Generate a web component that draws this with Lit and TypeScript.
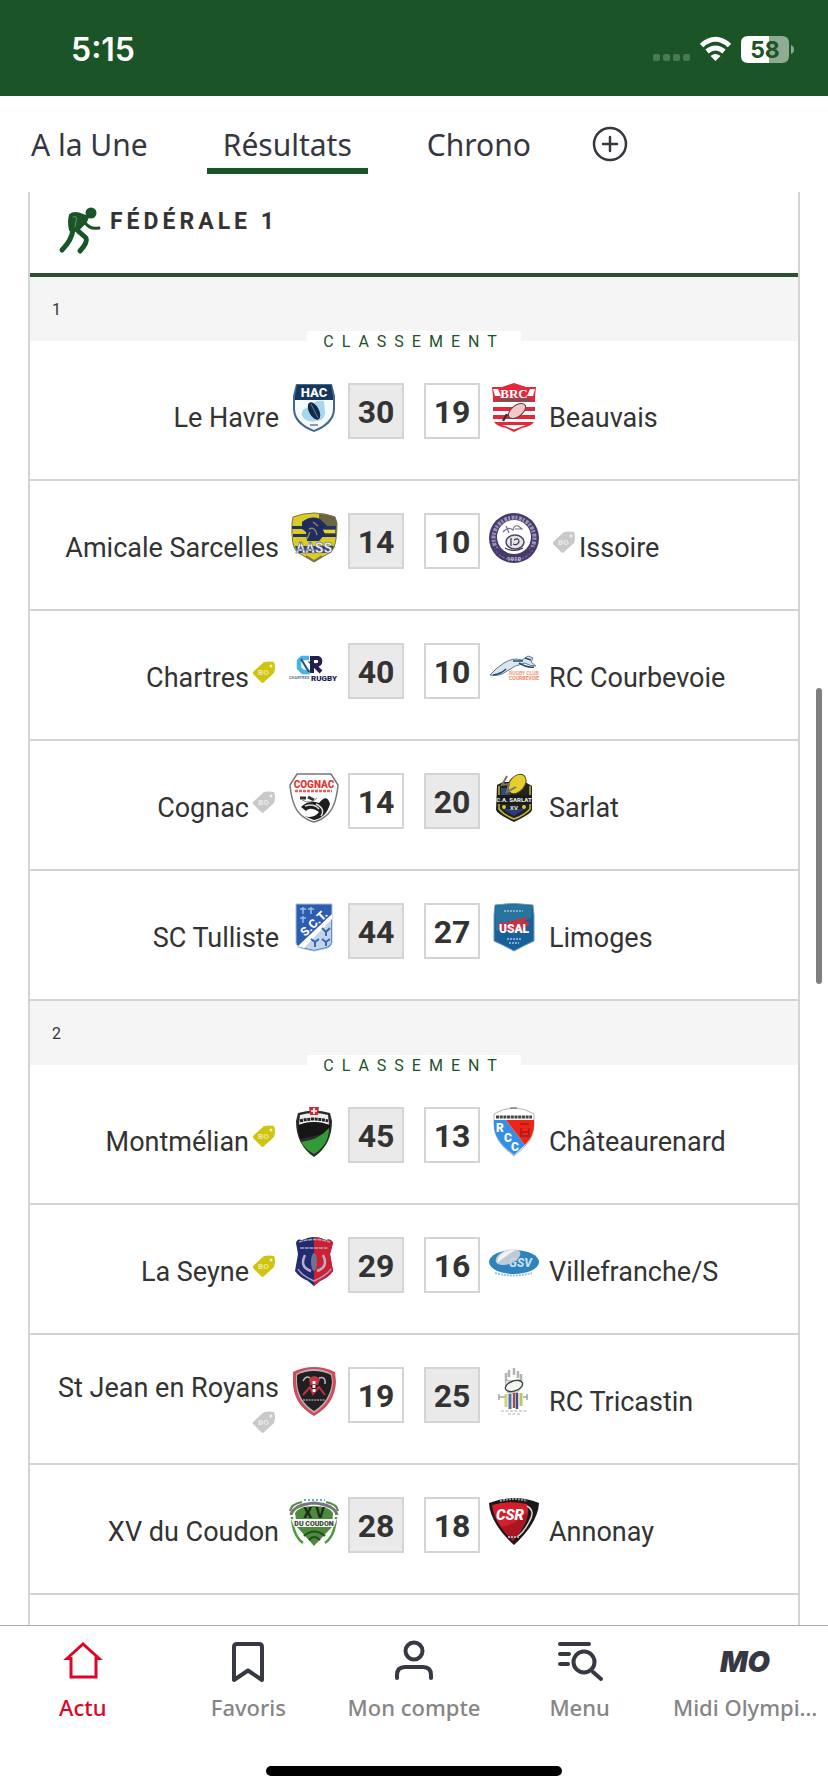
import { LitElement, html, svg, css, nothing, SVGTemplateResult } from "lit";
import { customElement, property } from "lit/decorators.js";
import { classMap } from "lit/directives/class-map.js";

type Tag = "gold" | "silver";
interface Team {
  name: string;
  crest: string;
  tag?: Tag;
}
interface Match {
  home: Team;
  away: Team;
  score: [number, number];
}
interface Pool {
  id: string;
  matches: Match[];
}

const pools: Pool[] = [
  {
    id: "1",
    matches: [
      { home: { name: "Le Havre", crest: "havre" }, away: { name: "Beauvais", crest: "beauvais" }, score: [30, 19] },
      { home: { name: "Amicale Sarcelles", crest: "sarcelles" }, away: { name: "Issoire", crest: "issoire", tag: "silver" }, score: [14, 10] },
      { home: { name: "Chartres", crest: "chartres", tag: "gold" }, away: { name: "RC Courbevoie", crest: "courbevoie" }, score: [40, 10] },
      { home: { name: "Cognac", crest: "cognac", tag: "silver" }, away: { name: "Sarlat", crest: "sarlat" }, score: [14, 20] },
      { home: { name: "SC Tulliste", crest: "tulle" }, away: { name: "Limoges", crest: "limoges" }, score: [44, 27] },
    ],
  },
  {
    id: "2",
    matches: [
      { home: { name: "Montmélian", crest: "montmelian", tag: "gold" }, away: { name: "Châteaurenard", crest: "chateaurenard" }, score: [45, 13] },
      { home: { name: "La Seyne", crest: "seyne", tag: "gold" }, away: { name: "Villefranche/S", crest: "villefranche" }, score: [29, 16] },
      { home: { name: "St Jean en Royans", crest: "royans", tag: "silver" }, away: { name: "RC Tricastin", crest: "tricastin" }, score: [19, 25] },
      { home: { name: "XV du Coudon", crest: "coudon" }, away: { name: "Annonay", crest: "annonay" }, score: [28, 18] },
    ],
  },
];

const crests: Record<string, SVGTemplateResult> = {
  havre: svg`
    <path d="M7 1H43L46 13V26C46 37 37 45 25 49C13 45 4 37 4 26V13Z" fill="#41688f"/>
    <path d="M8 2H42L44 13V17H6V13Z" fill="#16365c"/>
    <path d="M6 17H44V26C44 36 35 43 25 47C15 43 6 36 6 26Z" fill="#f7fafc"/>
    <path d="M13 33Q12 24 20 25Q25 16 35 18L36 30Q36 37 27 38Q17 40 13 33Z" fill="#a8d6ee"/>
    <ellipse cx="25" cy="28" rx="5" ry="9.500" transform="rotate(-28 25 28)" fill="#12294a"/>
    <path d="M22 21L29 35" stroke="#66809c" stroke-width="1"/>
    <path d="M21 42H29" stroke="#8d9bab" stroke-width="2"/>
    <text x="25" y="14" text-anchor="middle" font-size="13" font-weight="800" fill="#fff">HAC</text>`,
  beauvais: svg`
    <path d="M3 4L13 4L25 0L37 4H47L46 14V37Q44 43 33 45L25 49L17 45Q6 43 4 37V14Z" fill="#e2283a"/>
    <path d="M4 19H46V24H4ZM4 28H46V32H4ZM4 36H46V39H4ZM13 42H37L25 46.500Z" fill="#fff"/>
    <path d="M4 6L9 6L12 13H6ZM46 6L41 6L38 13H44Z" fill="#fff"/>
    <path d="M8 17H42" stroke="#6d5557" stroke-width="3"/>
    <text x="25" y="15" text-anchor="middle" font-size="13" font-weight="900" fill="#fff" font-family="Liberation Serif, serif">BRC</text>
    <path d="M14 38L18 31" stroke="#333" stroke-width="2.500"/>
    <ellipse cx="28" cy="28" rx="10" ry="5.500" transform="rotate(-38 28 28)" fill="#f6c6c8" stroke="#5b3a3e" stroke-width="1"/>`,
  sarcelles: svg`
    <path d="M4 4Q14 0 25 0Q36 0 46 4L48 10Q48 34 42 39L25 49L8 39Q2 34 3 10Z" fill="#d9cd25" stroke="#77734a"/>
    <path d="M30 1Q40 1 46 4L48 10L47 22H30Z" fill="#6b6544"/>
    <path d="M3 13H47V16H3ZM4 21H47V24H4Z" fill="#23306a"/>
    <path d="M33 17H46V20H34Z" fill="#e6d91f"/>
    <path d="M13 9Q22 2 31 6L38 13L33 15L36 21L30 28H18L17 19L13 16Z" fill="#1e2c5f"/>
    <path d="M20 16Q26 13 28 22M24 9L29 13M18 26L21 19" stroke="#8a8a5c" stroke-width="1.500" fill="none"/>
    <path d="M6 33H45L42 40H8Z" fill="#35406e"/>
    <text x="25" y="40" text-anchor="middle" font-size="14" font-weight="900" fill="#f5f5f8" stroke="#4c5480" stroke-width=".5">AASS</text>
    <path d="M17 43L25 48L33 43" stroke="#77734a" stroke-width="1.500" fill="none"/>`,
  issoire: svg`
    <circle cx="25" cy="25" r="25" fill="#473a6b"/>
    <circle cx="25" cy="25" r="20.500" fill="none" stroke="#9a92b4" stroke-width="4" stroke-dasharray="2 1.500 3 1" />
    <path d="M4 33A23 23 0 0 0 46 33L36 38H14Z" fill="#473a6b"/>
    <circle cx="25" cy="24" r="17" fill="#fff"/>
    <path d="M14 19Q19 13 24 17Q26 9 33 16H26M20 20L17 13" stroke="#756d89" stroke-width="1.200" fill="none"/>
    <ellipse cx="26" cy="29" rx="9" ry="7" fill="#e5e5ea" stroke="#4d4762" stroke-width="1.500"/>
    <path d="M22 25V33M25 27Q30 24 30 29Q28 33 24 31M16 35Q25 40 34 35" stroke="#37334a" stroke-width="1.200" fill="none"/>
    <text x="25" y="48" text-anchor="middle" font-size="6" font-weight="700" fill="#cfcade">1910</text>`,
  chartres: svg`
    <path d="M20 15H13L10 18V25L14 29H21" fill="none" stroke="#49b4e4" stroke-width="4.500"/>
    <path d="M12 16L20 29" stroke="#234b86" stroke-width="2"/>
    <path d="M23 30V15H29Q32 16 31 20Q29 23 25 22L32 29" fill="none" stroke="#221f4c" stroke-width="4"/>
    <text x="0" y="36" font-size="4" font-weight="700" fill="#6b6f86">CHARTRES</text>
    <text x="22" y="38" font-size="8" font-weight="900" fill="#221f4c">RUGBY</text>`,
  courbevoie: svg`
    <path d="M1 32Q8 24 15 20Q24 14 33 17L39 13L44 15L42 19L47 23Q40 23 36 20Q26 22 18 28Q10 34 1 32Z" fill="#dbe5ec" stroke="#5c7a96" stroke-width="1"/>
    <path d="M4 32Q12 31 17 26M24 18H34M36 15L42 17M30 20Q38 25 45 24" stroke="#2c4b6c" stroke-width="1.500" fill="none"/>
    <text x="20" y="32" font-size="5" font-weight="700" fill="#f09a7d">RUGBY CLUB</text>
    <text x="20" y="37" font-size="5" font-weight="700" fill="#ef8763">COURBEVOIE</text>`,
  cognac: svg`
    <path d="M8 1H42L49 12Q47 33 39 41Q33 47 25 49Q17 47 11 41Q3 33 1 12Z" fill="#fff" stroke="#777" stroke-width="1.500"/>
    <text x="25" y="15" text-anchor="middle" font-size="10" font-weight="900" fill="#e03a34">COGNAC</text>
    <path d="M6 18H43" stroke="#e2635d" stroke-width="2.500" stroke-dasharray="3 1"/>
    <path d="M11 25H17M19 24L25 27" stroke="#333" stroke-width="3" fill="none"/>
    <path d="M12 34Q20 26 30 30Q38 20 41 31Q37 45 25 47L15 43Q25 46 30 39Q21 33 17 38Z" fill="#1d1d1d"/>
    <path d="M27 31Q37 36 32 43M16 33Q25 30 30 36" stroke="#ddd" stroke-width="1.500" fill="none"/>
    <path d="M13 27Q22 32 28 25" stroke="#888" fill="none"/>`,
  sarlat: svg`
    <path d="M8 12L14 9H36L43 13V37Q42 41 25 49Q8 41 7 37Z" fill="#20231f"/>
    <path d="M10 13V36Q15 42 25 46Q36 42 41 36V13" fill="none" stroke="#c6b832" stroke-width="1.500"/>
    <path d="M12 15H21V26H12Z" fill="#314a7a"/>
    <path d="M14 36H36L25 43Z" fill="#2c3a86"/>
    <ellipse cx="28" cy="11" rx="11" ry="7.500" transform="rotate(-50 28 11)" fill="#e4cf2f" stroke="#4a451d"/>
    <path d="M18 3L13 12L20 11L18 19L27 14" stroke="#77765f" stroke-width="2" fill="none"/>
    <path d="M8 22H42V31H8Z" fill="#191b18"/>
    <text x="25" y="29" text-anchor="middle" font-size="6" font-weight="800" fill="#eee">C.A. SARLAT</text>
    <circle cx="15" cy="34" r="2" fill="#ddc82e"/><circle cx="35" cy="34" r="2" fill="#ddc82e"/>
    <text x="25" y="37" text-anchor="middle" font-size="6" font-weight="800" fill="#ddd">XV</text>`,
  tulle: svg`
    <path d="M7 1H43V40Q42 45 34 46L25 48L16 46Q8 45 7 40Z" fill="#2d5dae" stroke="#a7bee0"/>
    <path d="M42 12V40Q41 44 34 45L25 47L16 45L9 44Z" fill="#c2d3ec"/>
    <path d="M43 11V16L15 45L9 43Z" fill="#fff"/>
    <path d="M14 4V11M11 6H17M22 4V11M19 6H25M14 13V20M11 15H17" stroke="#9dbce6" stroke-width="1.500"/>
    <path d="M33 25L37 29L41 25M37 29V33M22 36L26 39L30 36M26 39V44M33 36L37 39L41 36M37 39V43" stroke="#3b68ac" stroke-width="2" fill="none"/>
    <text transform="translate(16 34) rotate(-43)" font-size="12" font-weight="800" fill="#fff">S.C.T.</text>`,
  limoges: svg`
    <path d="M6 2Q25 -1 44 2L45 12V38Q36 42 25 48Q14 42 5 38V12Z" fill="#17609a" stroke="#6f9dc0"/>
    <path d="M6 3Q25 0 43 3L42 15L7 28Z" fill="#28749f"/>
    <path d="M15 8H34" stroke="#9ebfd8" stroke-width="1.500" stroke-dasharray="2 1"/>
    <path d="M9 21L39 14L36 18L41 20L33 29L10 27Z" fill="#c7303e"/>
    <text x="25" y="30" text-anchor="middle" font-size="12" font-weight="900" fill="#fff">USAL</text>
    <path d="M18 36H32M20 40H30" stroke="#80aad0" stroke-width="2" stroke-dasharray="2 1"/>`,
  montmelian: svg`
    <path d="M9 6Q25 1 41 6L43 14Q43 38 25 50Q7 38 7 14Z" fill="#2b2b2b"/>
    <path d="M11 8Q25 4 39 8L40 18Q25 12 10 18Z" fill="#eee"/>
    <path d="M9 18Q25 12 41 18Q41 22 39 26L11 32Q9 25 9 18Z" fill="#161616"/>
    <path d="M12 35Q30 33 40 21Q40 38 25 47Q16 42 12 35Z" fill="#349a38"/>
    <path d="M11 14Q25 10 39 14" stroke="#222" stroke-width="3" stroke-dasharray="3 .7" fill="none"/>
    <path d="M20 0H30L29 8H21Z" fill="#c6303a"/><path d="M25 1V7M22 4H28" stroke="#fff" stroke-width="1.500"/>`,
  chateaurenard: svg`
    <path d="M5 7Q14 1 25 1Q36 1 45 7V18Q45 35 25 49Q5 35 5 18Z" fill="#fff" stroke="#b4b4b4"/>
    <path d="M5 13H17L36 38L25 48Q5 34 5 18Z" fill="#3490e4"/>
    <path d="M17 13H45V18Q45 29 36 38Z" fill="#ee2418"/>
    <path d="M31 17H40M32 21V29H40V21M33 25H39" stroke="#b51d16" stroke-width="2" fill="none"/>
    <path d="M7 10H43" stroke="#434343" stroke-width="3" stroke-dasharray="3 .7"/>
    <path d="M21 1H28" stroke="#555"/>
    <g font-size="12" font-weight="900" fill="#fff"><text x="7" y="25">R</text><text x="15" y="35">C</text><text x="22" y="44">C</text></g>`,
  seyne: svg`
    <path d="M13 3Q20 0 25 0Q30 0 37 3Q42 1 44 6L41 17L44 34Q40 40 31 44L25 49L19 44Q10 40 6 34L9 17L7 6Q8 1 13 3Z" fill="#222b70"/>
    <path d="M25 0Q30 0 37 3Q42 1 44 6L41 17L44 34Q40 40 31 44L25 49Z" fill="#cf2033"/>
    <path d="M10 5Q25 0 41 5M11 11H39" stroke="#a8a2b8" stroke-width="1.500" fill="none" stroke-dasharray="4 .7"/>
    <path d="M16 18Q10 30 22 34M34 18Q40 30 28 34" stroke="#b9b0c8" stroke-width="2.500" fill="none"/>
    <ellipse cx="25" cy="25" rx="3" ry="9" fill="#6d7395"/>
    <path d="M9 32Q12 38 25 44Q38 38 42 32" stroke="#aaa0b8" stroke-width="1.500" fill="none"/>`,
  villefranche: svg`
    <ellipse cx="25" cy="25" rx="25" ry="12" fill="#2e83bf"/>
    <text x="20" y="30" font-size="12" font-weight="800" font-style="italic" fill="#c9e1f3">GSV</text>
    <ellipse cx="19" cy="20" rx="13" ry="7" transform="rotate(-22 19 20)" fill="#cfd2d6" fill-opacity=".9"/>
    <path d="M8 26Q9 13 28 12Q18 18 8 26Z" fill="#f2f2f4"/>
    <path d="M6 36Q25 41 43 36" stroke="#9cc2de" stroke-width="2" stroke-dasharray="2 1" fill="none"/>`,
  royans: svg`
    <path d="M4 5Q14 0 25 0Q36 0 46 5L47 15Q46 37 25 49Q4 37 4 15Z" fill="#d04b59"/>
    <path d="M7 7Q15 2 25 2Q35 2 43 7L44 15Q43 35 25 46Q7 35 7 15Z" fill="#b9b1b4"/>
    <path d="M8 8Q16 4 25 4Q34 4 42 8L43 15Q41 34 25 44Q9 34 8 15Z" fill="#211f22"/>
    <path d="M20 12Q25 6 31 12L29 18H21Z" fill="#c03745"/>
    <path d="M14 14Q17 8 21 11M30 11Q37 9 36 17" stroke="#bbb" stroke-width="1.500" fill="none"/>
    <path d="M14 28L21 20L24 27L30 20L36 28" stroke="#c52f3f" stroke-width="2" fill="none"/>
    <path d="M25 14V26" stroke="#eee" stroke-width="3" stroke-dasharray="3 1"/>
    <path d="M14 33H36" stroke="#999" stroke-width="1.500" stroke-dasharray="2 .8"/>`,
  tricastin: svg`
    <path d="M17 14V6M20 10V3M25 8V1M29 11V4M32 14V7" stroke="#aeb5b0" stroke-width="2.500"/>
    <path d="M17 20Q15 11 20 14L30 13Q35 13 32 21L28 26H19Z" fill="#e7e9e4" stroke="#aaa"/>
    <ellipse cx="25" cy="19" rx="9" ry="5" transform="rotate(-20 25 19)" fill="#f5f5f0" stroke="#39413e" stroke-width="1.300"/>
    <path d="M17 27V40" stroke="#cdd37a" stroke-width="3"/><path d="M21 27V42" stroke="#536fa9" stroke-width="3"/><path d="M25 26V41" stroke="#a54652" stroke-width="2.500"/><path d="M28 26V42" stroke="#38518e" stroke-width="2.500"/><path d="M32 26V39" stroke="#c5c05f" stroke-width="3"/>
    <path d="M9 30H16M34 30H39M10 27V33M38 27V33" stroke="#a3aaa7" stroke-width="1.500"/>
    <path d="M12 44H38M19 47H31" stroke="#d5d9d7" stroke-width="2" stroke-dasharray="3 1.500"/>`,
  coudon: svg`
    <path d="M15 3H36" stroke="#65a9d7" stroke-width="2" stroke-dasharray="2 2"/>
    <path d="M1 14Q2 7 13 5M49 14Q48 7 37 5" stroke="#548d4b" stroke-width="2" fill="none"/>
    <path d="M3 20Q4 39 14 46M47 20Q46 39 36 46" stroke="#4d9a3f" stroke-width="2.500" fill="none"/>
    <path d="M2 18Q4 8 25 6Q46 8 48 18" fill="none" stroke="#777" stroke-width="3"/>
    <path d="M6 16Q10 9 25 9Q40 9 44 16L43 30L25 49L8 30Z" fill="#4d8a3c"/>
    <path d="M15 39Q25 30 36 39M20 43Q25 37 31 43" stroke="#234c22" stroke-width="2" fill="none"/>
    <text x="25" y="21" text-anchor="middle" font-size="14" font-weight="900" fill="#1f2b1e">X V</text>
    <path d="M2 22H48L45 30H5Z" fill="#f5f5f5"/>
    <text x="25" y="29" text-anchor="middle" font-size="7" font-weight="900" fill="#3c453b">DU COUDON</text>`,
  annonay: svg`
    <path d="M0 6Q25 -4 50 6Q49 26 25 48Q1 26 0 6Z" fill="#1c1718"/>
    <path d="M3 8Q20 3 38 7Q43 22 24 44Q5 26 3 8Z" fill="#d31f2c"/>
    <path d="M12 30Q28 27 38 15Q37 30 24 44Z" fill="#a91622"/>
    <path d="M38 9Q47 14 40 25Q35 35 28 40" stroke="#d8d8d8" stroke-width="1.500" fill="none"/>
    <path d="M11 4Q25 0 38 4" stroke="#999" stroke-width="2" stroke-dasharray="2 1" fill="none"/>
    <text x="21" y="23" text-anchor="middle" font-size="15" font-weight="900" font-style="italic" fill="#fff">CSR</text>
    <path d="M19 40H31" stroke="#aaa" stroke-width="2" stroke-dasharray="2 1"/>`,
};

@customElement("team-crest")
export class TeamCrest extends LitElement {
  @property() name = "";
  static styles = css`
    :host { display: block; width: 50px; height: 50px; }
    svg { display: block; width: 100%; height: 100%; overflow: visible; font-family: Roboto, sans-serif; }
  `;
  render() {
    return html`<svg viewBox="0 0 50 50" fill="none" aria-hidden="true">${crests[this.name]}</svg>`;
  }
}

@customElement("bonus-tag")
export class BonusTag extends LitElement {
  @property() kind: Tag = "gold";
  static styles = css`
    :host { display: block; width: 30px; height: 22px; }
    svg { display: block; }
    .gold { fill: #cfc510; }
    .silver { fill: #c9c9c9; }
    .hole { fill: #fff; fill-opacity: 0.7; }
    text { font: 800 8px Roboto, sans-serif; fill: #fff; fill-opacity: 0.6; }
  `;
  render() {
    return html`<svg class=${this.kind} width="30" height="22" viewBox="0 0 30 22" role="img" aria-label="Bonus">
      <path d="M4 11L15 1Q20 0 25 1Q27 6 25 12L14 22Q13 22 12 21L4 13Z" />
      <circle class="hole" cx="22" cy="5" r="1.500" />
      <text x="9" y="14">BO</text>
    </svg>`;
  }
}

@customElement("match-row")
export class MatchRow extends LitElement {
  @property({ attribute: false }) match!: Match;
  static styles = css`
    :host {
      display: grid;
      grid-template-columns: minmax(0, 1fr) auto minmax(0, 1fr);
      height: 128px;
      border-bottom: 2px solid #d4d4d4;
    }
    .team {
      display: flex;
      flex-wrap: wrap;
      row-gap: 6px;
      align-items: flex-start;
      align-content: center;
      padding: 6px 10px 0;
      font-size: 27px;
      line-height: 34px;
    }
    .home { justify-content: flex-end; }
    .middle { display: flex; align-items: flex-start; gap: 9px; padding-top: 32px; }
    .scores { display: flex; gap: 20px; }
    .score {
      box-sizing: border-box;
      width: 56px;
      height: 56px;
      border: 2px solid #d4d4d4;
      font-size: 32px;
      font-weight: 700;
      line-height: 54px;
      text-align: center;
    }
    .win { background: #eaeaea; }
  `;
  private tag(t: Team) {
    return t.tag ? html`<bonus-tag .kind=${t.tag}></bonus-tag>` : nothing;
  }
  render() {
    const { home, away, score } = this.match;
    const box = (a: number, b: number) => html`<span class=${classMap({ score: true, win: a > b })}>${a}</span>`;
    return html`
      <div class="team home"><span>${home.name}</span>${this.tag(home)}</div>
      <div class="middle">
        <team-crest name=${home.crest}></team-crest>
        <div class="scores">${box(score[0], score[1])}${box(score[1], score[0])}</div>
        <team-crest name=${away.crest}></team-crest>
      </div>
      <div class="team">${this.tag(away)}<span>${away.name}</span></div>
    `;
  }
}

const navItems = [
  {
    label: "Actu",
    active: true,
    icon: svg`<path d="M8 18.500L24 4L40 18.500H37V37H12V18.500Z" stroke="currentColor" stroke-width="3" stroke-linejoin="miter"/>`,
  },
  {
    label: "Favoris",
    icon: svg`<path d="M10 40V7Q10 4 13 4H35Q38 4 38 7V40L24 30.500Z" stroke-linejoin="round"/>`,
  },
  {
    label: "Mon compte",
    icon: svg`<circle cx="24" cy="11" r="8.500"/><path d="M7 38V35Q7 27 15 27H33Q41 27 41 35V38"/>`,
  },
  {
    label: "Menu",
    icon: svg`<path d="M4 4H33M4 14H13M4 24H12M37 32L45 39"/><circle cx="28" cy="22" r="10.500"/>`,
  },
  {
    label: "Midi Olympi…",
    icon: svg`<text x="24" y="32" text-anchor="middle">MO</text>`,
  },
];

@customElement("app-root")
export class AppRoot extends LitElement {
  static styles = css`
    :host {
      display: flex;
      flex-direction: column;
      height: 100vh;
      background: #fff;
      color: #333;
      font-family: Roboto, sans-serif;
    }
    button { border: 0; background: none; padding: 0; font: inherit; color: inherit; }
    a { color: inherit; text-decoration: none; }
    svg { display: block; }
    h1, h2, ul { margin: 0; padding: 0; }
    .status {
      display: flex;
      align-items: center;
      justify-content: space-between;
      box-sizing: border-box;
      height: 96px;
      padding: 4px 33px 0 71px;
      background: #1b5427;
      color: #fff;
    }
    .clock { font: 600 32px/40px Inter, sans-serif; }
    .battery { font: 700 23px Inter, sans-serif; fill: #1b5427; }
    .tabs {
      display: flex;
      align-items: center;
      gap: 43px;
      height: 96px;
      padding: 0 15px;
      color: #35373f;
      font: 30px/46px "Noto Sans", sans-serif;
    }
    .tab { padding: 8px 16px 0; border-bottom: 6px solid transparent; }
    .current { border-color: #1b5427; }
    .feed { position: relative; display: flex; flex: 1; min-height: 0; overflow: hidden; padding: 0 28px; }
    .card { flex: 1; border: solid #d4d4d4; border-width: 0 2px; }
    .title {
      display: flex;
      gap: 8px;
      height: 81px;
      padding-left: 28px;
      border-bottom: 4px solid #2c4f2d;
    }
    .title svg { margin-top: 15px; }
    .title h1 { padding-top: 14px; font-size: 23px; line-height: 32px; letter-spacing: 4px; text-transform: uppercase; }
    .pool { height: 64px; padding-left: 22px; background: #f5f5f5; font-size: 16px; font-weight: 400; line-height: 66px; }
    .ranking {
      display: block;
      width: max-content;
      height: 20px;
      margin: -10px auto 0;
      padding: 0 16px;
      background: #fff;
      color: #1b5427;
      font-size: 16px;
      line-height: 22px;
      letter-spacing: 8px;
      text-transform: uppercase;
    }
    .matches { list-style: none; }
    .scroll { position: absolute; right: 6px; top: 34.6%; width: 6px; height: 20.7%; border-radius: 3px; background: #7f7f7f; }
    .bottom { border-top: 1px solid #ababab; background: #fff; }
    .items { display: grid; grid-template-columns: repeat(5, minmax(0, 1fr)); height: 140px; box-sizing: border-box; padding-top: 14px; }
    .item { display: flex; flex-direction: column; align-items: center; gap: 9px; color: #858585; }
    .item svg { overflow: visible; stroke: #363943; stroke-width: 4; stroke-linecap: round; fill: none; }
    .item svg text { font: italic 900 29px Inter, sans-serif; fill: #363943; stroke: none; }
    .label { white-space: nowrap; font: 500 22px/32px "Noto Sans", sans-serif; }
    .active, .active svg { color: #dd0626; }
    .handle { width: 296px; height: 10px; margin: 0 auto 16px; border-radius: 5px; background: #000; }
  `;

  render() {
    return html`
      <header class="status">
        <span class="clock">5:15</span>
        <svg width="142" height="28" viewBox="0 0 142 28" role="img" aria-label="Wi-Fi, batterie 58 %">
          <g fill="#4b7954"><rect y="18" width="7" height="7" rx="2"/><rect x="10" y="18" width="7" height="7" rx="2"/><rect x="20" y="18" width="7" height="7" rx="2"/><rect x="30" y="18" width="7" height="7" rx="2"/></g>
          <g fill="none" stroke="#fff" stroke-width="5"><path d="M48.500 9.500Q62.500 -3 76.500 9.500"/><path d="M54 15.500Q62.500 8.500 71 15.500"/></g>
          <path d="M57.500 20Q62.500 16 67.500 20L62.500 25Z" fill="#fff"/>
          <path d="M95 0H116V27H95Q88 27 88 20V7Q88 0 95 0Z" fill="#fff"/>
          <path d="M116 0H129Q136 0 136 7V20Q136 27 129 27H116Z" fill="#8fab94"/>
          <path d="M138 9Q141 10 141 13.500Q141 17 138 18Z" fill="#8fab94"/>
          <text class="battery" x="112" y="22" text-anchor="middle">58</text>
        </svg>
      </header>
      <nav class="tabs">
        <a class="tab" href="#une">A la Une</a>
        <a class="tab current" href="#resultats" aria-current="page">Résultats</a>
        <a class="tab" href="#chrono">Chrono</a>
        <button aria-label="Ajouter">
          <svg width="40" height="36" viewBox="5 0 40 36" fill="none" stroke="#35373f" stroke-width="2.500" stroke-linecap="round">
            <circle cx="25" cy="18" r="16"/><path d="M25 11V25M18 18H32"/>
          </svg>
        </button>
      </nav>
      <main class="feed">
        <section class="card">
          <header class="title">
            <svg width="44" height="50" viewBox="0 0 44 50" fill="none" stroke="#1b5427" stroke-linecap="round" stroke-linejoin="round" aria-hidden="true">
              <circle cx="33" cy="6" r="5.500" fill="#1b5427" stroke="none"/>
              <path d="M12 8Q16 4 25 8L30 10L28 15L20 23H12Q10 15 12 8Z" fill="#1b5427" stroke-width="2"/>
              <path d="M26 14Q31 23 41 21" stroke-width="3"/>
              <path d="M15 22Q14 33 4 43M18 22L28 31Q30 35 22 44" stroke-width="5"/>
              <path d="M15 10Q20 8 18 14L17 20" stroke="#7d9e84" stroke-width=".8"/>
            </svg>
            <h1>Fédérale 1</h1>
          </header>
          ${pools.map(
            (pool) => html`
              <h2 class="pool">${pool.id}</h2>
              <a class="ranking" href="#classement">Classement</a>
              <ul class="matches">
                ${pool.matches.map((m) => html`<li><match-row .match=${m}></match-row></li>`)}
              </ul>
            `
          )}
        </section>
        <div class="scroll"></div>
      </main>
      <footer class="bottom">
        <nav class="items">
          ${navItems.map(
            (item) => html`
              <a class=${classMap({ item: true, active: !!item.active })} href="#${item.label}">
                <svg width="48" height="42" viewBox="0 0 48 42" aria-hidden="true">${item.icon}</svg>
                <span class="label">${item.label}</span>
              </a>
            `
          )}
        </nav>
        <div class="handle"></div>
      </footer>
    `;
  }
}
